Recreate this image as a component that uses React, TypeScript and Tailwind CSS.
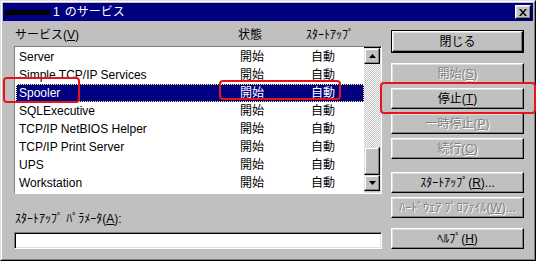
import React from "react";

const FONT = { fontFamily: '"Liberation Sans", "Noto Sans CJK JP", sans-serif' };

const rows = [
  "Server",
  "Simple TCP/IP Services",
  "Spooler",
  "SQLExecutive",
  "TCP/IP NetBIOS Helper",
  "TCP/IP Print Server",
  "UPS",
  "Workstation",
];

function Btn({
  children,
  disabled,
  def,
  className = "",
}: {
  children: React.ReactNode;
  disabled?: boolean;
  def?: boolean;
  className?: string;
}) {
  const inner = (
    <div
      className={
        "flex h-[21px] w-full items-center justify-center border border-t-white border-l-white border-b-black border-r-black bg-[#c0c0c0] text-[12px] leading-none shadow-[inset_-1px_-1px_0_#808080,inset_1px_1px_0_#dfdfdf] " +
        (disabled ? "text-[#808080] [text-shadow:1px_1px_0_#ffffff]" : "text-black")
      }
    >
      {children}
    </div>
  );
  if (def) {
    return <div className={"border border-black " + className}>{inner}</div>;
  }
  return <div className={className}>{inner}</div>;
}

function ArrowBtn({ up }: { up?: boolean }) {
  return (
    <div className="flex h-[16px] w-[16px] items-center justify-center border border-t-[#dfdfdf] border-l-[#dfdfdf] border-b-black border-r-black bg-[#c0c0c0] shadow-[inset_-1px_-1px_0_#808080,inset_1px_1px_0_#ffffff]">
      <svg width="7" height="4" viewBox="0 0 7 4">
        {up ? (
          <polygon points="3.5,0 7,4 0,4" fill="#000" />
        ) : (
          <polygon points="0,0 7,0 3.5,4" fill="#000" />
        )}
      </svg>
    </div>
  );
}

export default function App() {
  return (
    <div
      className="relative h-[261px] w-[536px] overflow-hidden bg-[#c0c0c0]"
      style={FONT}
    >
      <div className="h-full w-full border border-t-[#dfdfdf] border-l-[#dfdfdf] border-b-black border-r-black">
        <div className="flex h-full w-full flex-col border border-t-white border-l-white border-b-[#808080] border-r-[#808080] p-[1px]">
          {/* Title bar */}
          <div className="flex h-[18px] items-center bg-[#000080] pl-[2px] pr-[2px]">
            <div className="h-[5px] w-[45px] bg-black" />
            <span className="ml-[3px] text-[12px] leading-none text-white">1</span>
            <span className="ml-[5px] text-[12px] leading-none text-white">
              のサービス
            </span>
            <div className="ml-auto flex h-[14px] w-[16px] items-center justify-center border border-t-white border-l-white border-b-black border-r-black bg-[#c0c0c0] shadow-[inset_-1px_-1px_0_#808080,inset_1px_1px_0_#dfdfdf]">
              <svg width="8" height="7" viewBox="0 0 8 7">
                <path
                  d="M0 0h2l2 2.5L6 0h2L5 3.5 8 7H6L4 4.5 2 7H0l3-3.5z"
                  fill="#000"
                />
              </svg>
            </div>
          </div>

          {/* Body */}
          <div className="flex flex-1 pl-[11px] pr-[9px]">
            {/* Left column */}
            <div className="flex w-[368px] flex-col">
              <div className="flex h-[25px] items-end pb-[5px] text-[12px] leading-none text-black">
                <span className="ml-[1px] w-[223px]">
                  サービス(<u>V</u>)
                </span>
                <span className="w-[68px]">状態</span>
                <span>ｽﾀｰﾄｱｯﾌﾟ</span>
              </div>
              <div className="flex h-[148px] border border-t-[#808080] border-l-[#808080] border-b-white border-r-white shadow-[inset_1px_1px_0_#000,inset_-1px_-1px_0_#dfdfdf]">
                <div className="flex flex-1 flex-col bg-white pl-[1px] pt-[1px]">
                  {rows.map((r) => {
                    const sel = r === "Spooler";
                    return (
                      <div
                        key={r}
                        className={
                          "flex h-[18px] items-center text-[12px] leading-none " +
                          (sel
                            ? "bg-[#000080] text-white outline-1 -outline-offset-1 outline-dotted outline-[#ffff80]"
                            : "text-black")
                        }
                      >
                        <span className="w-[224px] pl-[3px]">{r}</span>
                        <span className="w-[71px]">開始</span>
                        <span>自動</span>
                      </div>
                    );
                  })}
                </div>
                <div className="mr-[1px] flex w-[16px] flex-col pt-[1px] pb-[1px]">
                  <ArrowBtn up />
                  <div className="h-[83px] bg-[repeating-conic-gradient(#c0c0c0_0%_25%,#ffffff_0%_50%)] bg-[length:2px_2px]" />
                  <div className="h-[28px] border border-t-[#dfdfdf] border-l-[#dfdfdf] border-b-black border-r-black bg-[#c0c0c0] shadow-[inset_-1px_-1px_0_#808080,inset_1px_1px_0_#ffffff]" />
                  <ArrowBtn />
                </div>
              </div>
              <div className="mt-[19px] text-[12px] leading-none text-black">
                <span className="ml-[1px]">
                  ｽﾀｰﾄｱｯﾌﾟ ﾊﾟﾗﾒｰﾀ(<u>A</u>):
                </span>
              </div>
              <div className="mt-[7px] h-[17px] border border-t-[#808080] border-l-[#808080] border-b-white border-r-white bg-white shadow-[inset_1px_1px_0_#000,inset_-1px_-1px_0_#dfdfdf]" />
            </div>

            {/* Right column */}
            <div className="ml-[9px] flex w-[133px] flex-col pt-[9px]">
              <Btn def>閉じる</Btn>
              <Btn disabled className="mt-[10px]">
                開始(<u>S</u>)
              </Btn>
              <Btn className="mt-[4px]">
                停止(<u>T</u>)
              </Btn>
              <Btn disabled className="mt-[4px]">
                一時停止(<u>P</u>)
              </Btn>
              <Btn disabled className="mt-[4px]">
                続行(<u>C</u>)
              </Btn>
              <Btn className="mt-[13px]">
                ｽﾀｰﾄｱｯﾌﾟ(<u>R</u>)...
              </Btn>
              <Btn disabled className="mt-[4px]">
                ﾊｰﾄﾞｳｪｱ ﾌﾟﾛﾌｧｲﾙ(<u>W</u>)...
              </Btn>
              <Btn className="mt-[10px]">
                ﾍﾙﾌﾟ(<u>H</u>)
              </Btn>
            </div>
          </div>
        </div>
      </div>

      {/* Red annotation boxes */}
      <div className="absolute left-[3px] top-[77px] h-[26px] w-[77px] rounded-[4px] border-2 border-[#e8141c]" />
      <div className="absolute left-[219px] top-[80px] h-[20px] w-[122px] rounded-[4px] border-2 border-[#e8141c]" />
      <div className="absolute left-[380px] top-[82px] h-[32px] w-[156px] rounded-[4px] border-2 border-[#e8141c]" />
    </div>
  );
}
